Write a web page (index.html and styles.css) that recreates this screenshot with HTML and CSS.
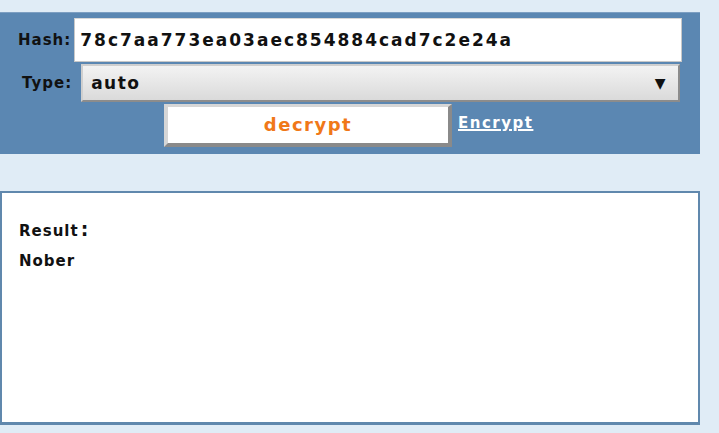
FILE: index.html
```html
<!DOCTYPE html>
<html>
<head>
<meta charset="utf-8">
<link rel="stylesheet" href="styles.css">
</head>
<body>
<div class="panel">
  <div class="row row-hash">
    <span class="label">Hash:</span>
    <div class="field hash">78c7aa773ea03aec854884cad7c2e24a</div>
  </div>
  <div class="row row-type">
    <span class="label">Type:</span>
    <div class="field select"><span>auto</span><span class="arrow">▼</span></div>
  </div>
  <div class="row row-btn">
    <div class="btn">decrypt</div>
    <a class="link" href="#">Encrypt</a>
  </div>
</div>
<div class="result">
  <div class="res-title">Result<span class="colon">:</span></div>
  <div class="res-value">Nober</div>
</div>
</body>
</html>
```
FILE: styles.css
```css
html, body {
  margin: 0;
  padding: 0;
  background: #e0ecf6;
  font-family: "DejaVu Sans", sans-serif;
  font-weight: bold;
  color: #111;
}
.panel {
  margin-top: 12px;
  width: 700px;
  height: 142px;
  box-sizing: border-box;
  background: #5b87b2;
  border-top: 1px solid #7d9fc2;
  display: flex;
  flex-direction: column;
}
.row {
  display: flex;
  align-items: center;
}
.row-hash {
  margin-top: 5px;
  padding-left: 18px;
}
.row-type {
  margin-top: 2px;
  padding-left: 22px;
}
.row-btn {
  margin-top: 2px;
  padding-left: 164px;
}
.label {
  font-size: 15px;
  letter-spacing: 1px;
  color: #111;
}
.field {
  box-sizing: border-box;
  display: flex;
  align-items: center;
}
.hash {
  margin-left: 3px;
  width: 608px;
  height: 44px;
  background: #fff;
  border: 1px solid #c8c8c8;
  border-top-color: #d8d8d8;
  padding-left: 5px;
  font-size: 17px;
  letter-spacing: 2px;
}
.select {
  margin-left: 9px;
  width: 599px;
  height: 38px;
  background: linear-gradient(#f3f3f3, #dadada);
  border: 2px solid #8c8c8c;
  border-top-color: #cfcfcf;
  border-left-color: #cfcfcf;
  padding-left: 8px;
  padding-right: 11px;
  justify-content: space-between;
  font-size: 17px;
  letter-spacing: 1.5px;
}
.arrow {
  font-size: 14px;
  color: #111;
}
.btn {
  box-sizing: border-box;
  width: 288px;
  height: 43px;
  background: #fff;
  border: 4px solid #8a8a8a;
  border-top: 3px solid #d6d6d6;
  border-left: 4px solid #d6d6d6;
  color: #f07818;
  font-size: 18px;
  letter-spacing: 1.5px;
  display: flex;
  align-items: center;
  justify-content: center;
  padding-bottom: 1px;
}
.link {
  margin-left: 6px;
  color: #fff;
  font-size: 15px;
  letter-spacing: 1.5px;
  text-decoration: underline;
  text-decoration-thickness: 2px;
  margin-top: -5px;
}
.result {
  margin-top: 37px;
  width: 700px;
  height: 234px;
  box-sizing: border-box;
  background: #fff;
  border: 2px solid #6088ad;
  border-bottom: 3px solid #6088ad;
  padding: 25px 0 0 17px;
  font-size: 15px;
  letter-spacing: 1px;
}
.res-value {
  margin-top: 12px;
}
.colon {
  font-size: 19px;
  margin-left: 2px;
}
```
